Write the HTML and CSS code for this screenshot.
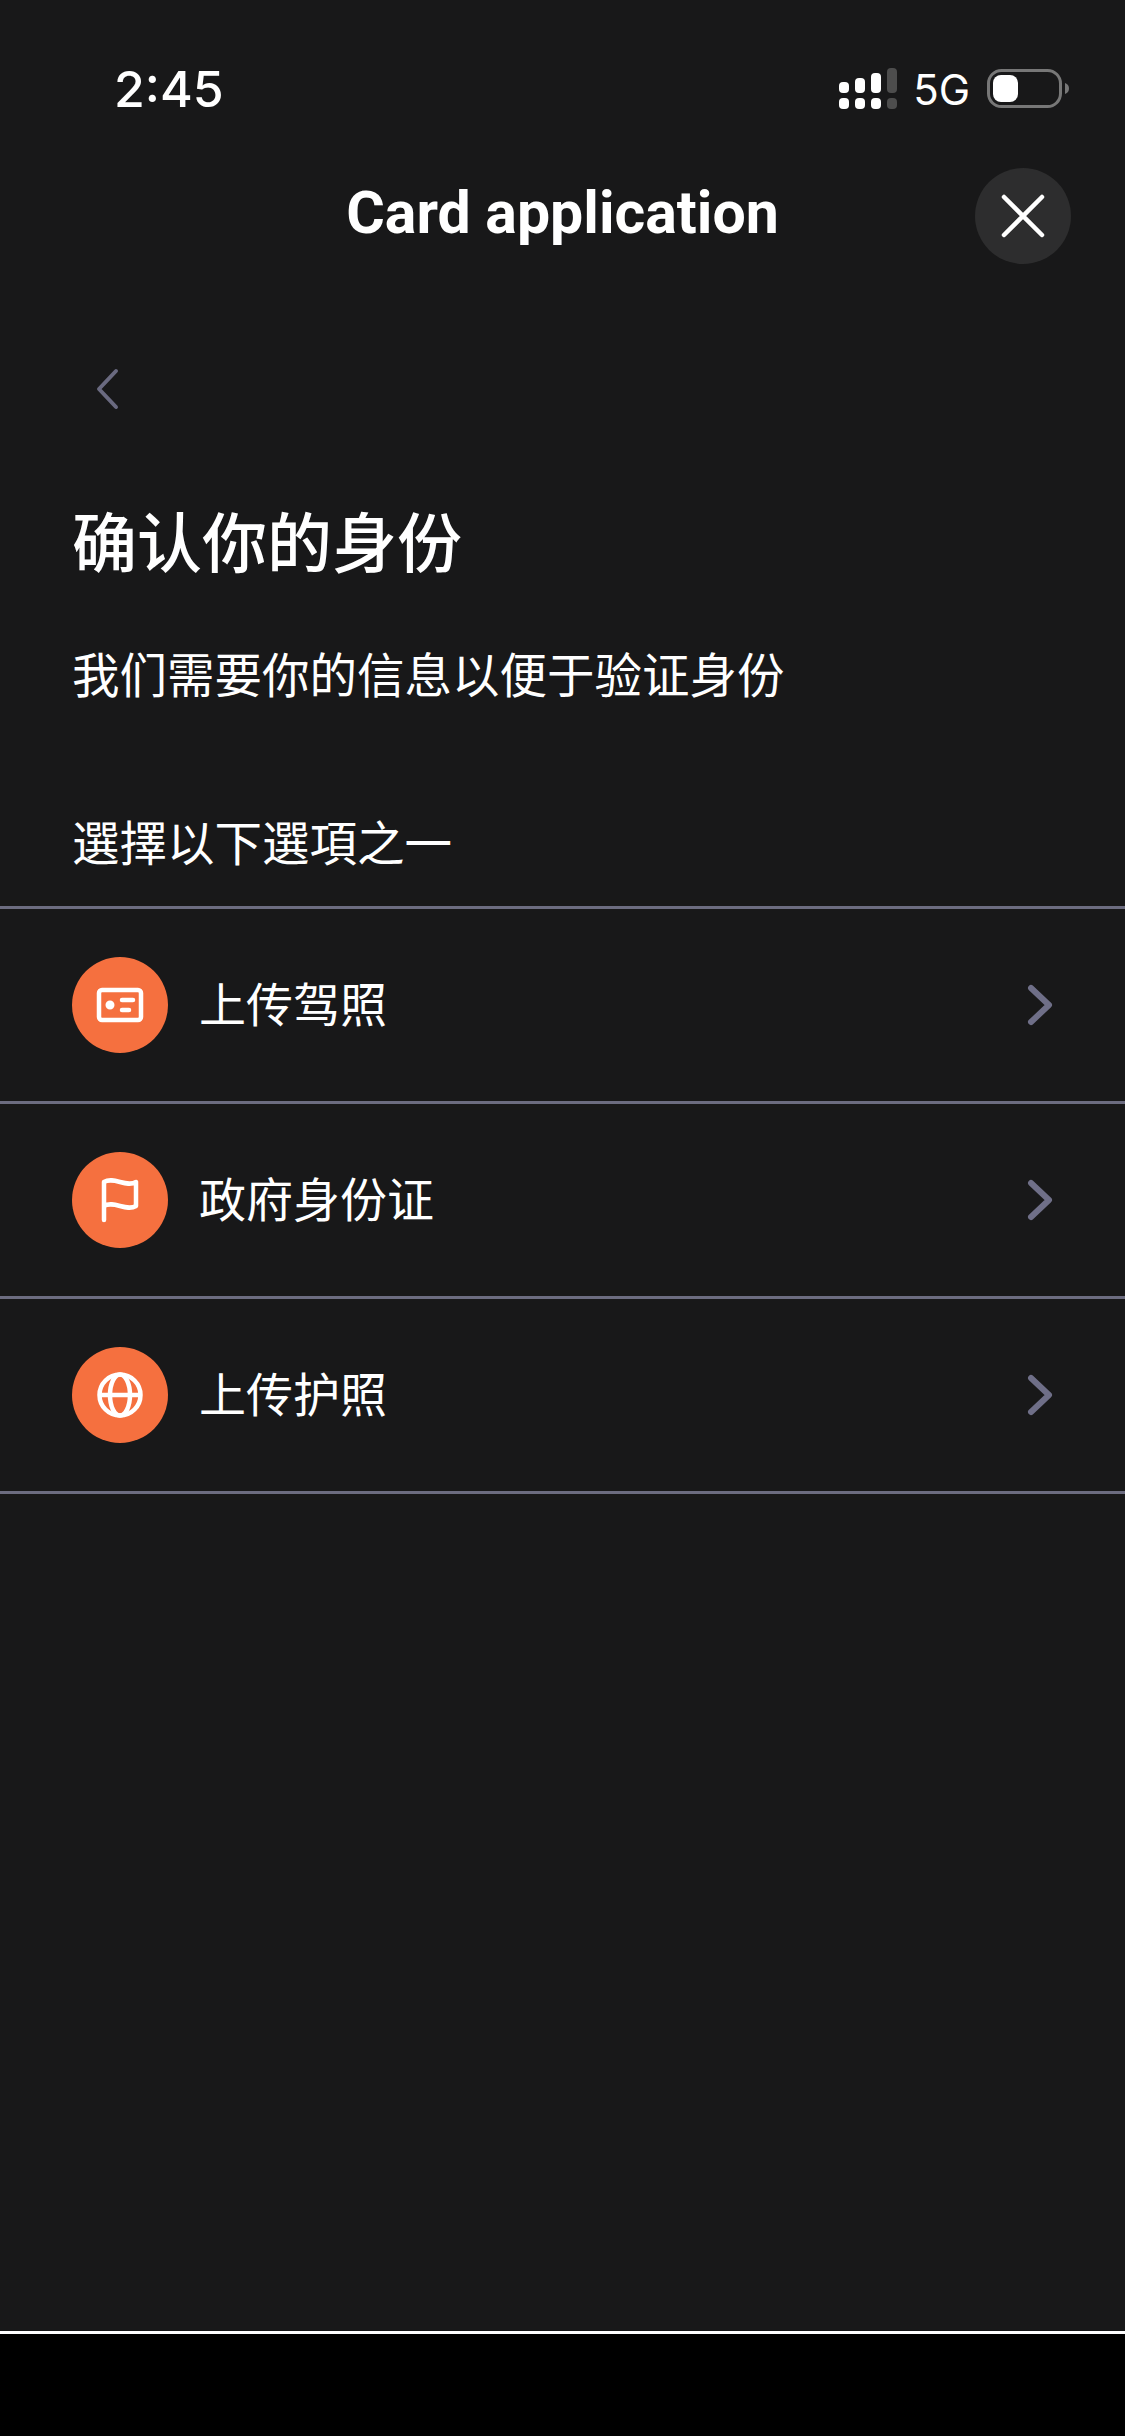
FILE: index.html
```html
<!DOCTYPE html>
<html lang="zh">
<head>
<meta charset="utf-8">
<title>Card application</title>
<link rel="stylesheet" href="styles.css">
</head>
<body>
<div class="screen">
  <main class="main">
    <div class="status">
      <span class="time">2:45</span>
      <div class="status-right">
        <svg class="signal" width="58" height="41" viewBox="0 0 58 41">
          <g fill="#fff">
            <rect x="0" y="14" width="10" height="11" rx="4"/><rect x="0" y="30" width="10" height="11" rx="4"/>
            <rect x="16" y="10" width="10" height="15" rx="4"/><rect x="16" y="30" width="10" height="11" rx="4"/>
            <rect x="32" y="5" width="10" height="20" rx="4"/><rect x="32" y="30" width="10" height="11" rx="4"/>
          </g>
          <g fill="#4d4d4d">
            <rect x="48" y="0" width="10" height="25" rx="4"/><rect x="48" y="30" width="10" height="11" rx="4"/>
          </g>
        </svg>
        <span class="net">5G</span>
        <svg class="battery" width="82" height="39" viewBox="0 0 82 39">
          <rect x="1.500" y="1.500" width="72" height="36" rx="13" fill="none" stroke="#777" stroke-width="3"/>
          <rect x="6" y="6" width="25" height="27" rx="8" fill="#fff"/>
          <path d="M78 14c3 1 4 3 4 5.500s-1 4.500-4 5.500z" fill="#777"/>
        </svg>
      </div>
    </div>
    <header class="topbar">
      <h1 class="topbar-title">Card application</h1>
      <button class="close" type="button" aria-label="Close">
        <svg width="44" height="44" viewBox="0 0 44 44"><path d="M3 3l38 38M41 3L3 41" fill="none" stroke="#fff" stroke-width="4.500" stroke-linecap="round"/></svg>
      </button>
    </header>
    <div class="back">
      <svg width="24" height="42" viewBox="0 0 24 42"><path d="M20 3L3 21l17 18" fill="none" stroke="#6a6a80" stroke-width="4" stroke-linecap="round" stroke-linejoin="round"/></svg>
    </div>
    <section class="intro">
      <h2 class="heading">确认你的身份</h2>
      <p class="sub">我们需要你的信息以便于验证身份</p>
      <p class="choose">選擇以下選項之一</p>
    </section>
    <ul class="list">
      <li class="row">
        <span class="badge">
          <svg width="96" height="96" viewBox="0 0 96 96" fill="none" stroke="#fff" stroke-width="4.500" stroke-linecap="round">
            <rect x="27" y="33" width="42" height="30" rx="3"/>
            <circle cx="38" cy="48" r="3" fill="#fff" stroke-width="3"/>
            <path d="M50 43h11M50 53h7"/>
          </svg>
        </span>
        <span class="label">上传驾照</span>
        <svg class="chev" width="28" height="44" viewBox="0 0 28 44"><path d="M4 5l18 17L4 39" fill="none" stroke="#6f6f88" stroke-width="6" stroke-linecap="round" stroke-linejoin="round"/></svg>
      </li>
      <li class="row">
        <span class="badge">
          <svg width="96" height="96" viewBox="0 0 96 96" fill="none" stroke="#fff" stroke-width="4.500" stroke-linecap="round" stroke-linejoin="round">
            <path d="M32 68V30c10-6 22 6 32 0v24c-10 6-22-6-32 0"/>
          </svg>
        </span>
        <span class="label">政府身份证</span>
        <svg class="chev" width="28" height="44" viewBox="0 0 28 44"><path d="M4 5l18 17L4 39" fill="none" stroke="#6f6f88" stroke-width="6" stroke-linecap="round" stroke-linejoin="round"/></svg>
      </li>
      <li class="row">
        <span class="badge">
          <svg width="96" height="96" viewBox="0 0 96 96" fill="none" stroke="#fff" stroke-width="4.500">
            <circle cx="48" cy="48" r="20.500"/>
            <ellipse cx="48" cy="48" rx="10" ry="20.500"/>
            <path d="M27.500 48h41"/>
          </svg>
        </span>
        <span class="label">上传护照</span>
        <svg class="chev" width="28" height="44" viewBox="0 0 28 44"><path d="M4 5l18 17L4 39" fill="none" stroke="#6f6f88" stroke-width="6" stroke-linecap="round" stroke-linejoin="round"/></svg>
      </li>
    </ul>
  </main>
  <footer class="bottom"></footer>
</div>
</body>
</html>
```
FILE: styles.css
```css
* { box-sizing: border-box; }
html, body { margin: 0; padding: 0; background: #000; }
body { font-family: "Noto Sans CJK SC", "Noto Sans", sans-serif; color: #fff; }
.screen { width: 1125px; height: 2436px; display: flex; flex-direction: column; }
.main { height: 2331px; background: #181819; }
.status { height: 150px; display: flex; justify-content: space-between; align-items: flex-start; padding: 58px 56px 0 114px; }
.time { font-family: Inter, sans-serif; font-size: 50px; font-weight: 500; line-height: 62px; }
.status-right { display: flex; align-items: flex-start; padding-top: 10px; }
.signal { margin-right: 16px; }
.net { font-family: Inter, sans-serif; font-size: 42px; font-weight: 400; line-height: 44px; margin-top: 0; margin-right: 17px; }
.battery { margin-top: 1px; }
.topbar { position: relative; height: 124px; margin-top: 18px; padding-top: 10px; display: flex; align-items: flex-start; justify-content: center; }
.topbar-title { margin: 0; font-family: Roboto, sans-serif; font-size: 59px; font-weight: 700; line-height: 70px; letter-spacing: 0; }
.close { position: absolute; right: 54px; top: 0; width: 96px; height: 96px; border: 0; padding: 0; border-radius: 50%; background: #2d2d2e; display: flex; align-items: center; justify-content: center; }
.back { padding: 76px 0 0 96px; height: 202px; }
.back svg { display: block; }
.intro { padding: 0 0 0 72px; }
.heading { margin: 0; font-size: 65px; font-weight: 500; line-height: 90px; }
.sub { margin: 0; font-size: 47.500px; line-height: 68px; margin-top: 55px; }
.choose { margin: 0; font-size: 47.500px; line-height: 68px; margin-top: 100px; }
.list { list-style: none; margin: 31px 0 0; padding: 0; border-top: 3px solid #6c6c80; }
.row { height: 195px; display: flex; align-items: center; padding: 0 70px 0 72px; border-bottom: 3px solid #6c6c80; }
.badge { width: 96px; height: 96px; border-radius: 50%; background: #f5703f; flex: none; }
.badge svg { display: block; }
.label { font-size: 47px; line-height: 68px; margin-left: 31px; margin-top: -7px; flex: 1; }
.chev { flex: none; }
.bottom { height: 105px; background: #000; border-top: 3px solid #fff; }
```
